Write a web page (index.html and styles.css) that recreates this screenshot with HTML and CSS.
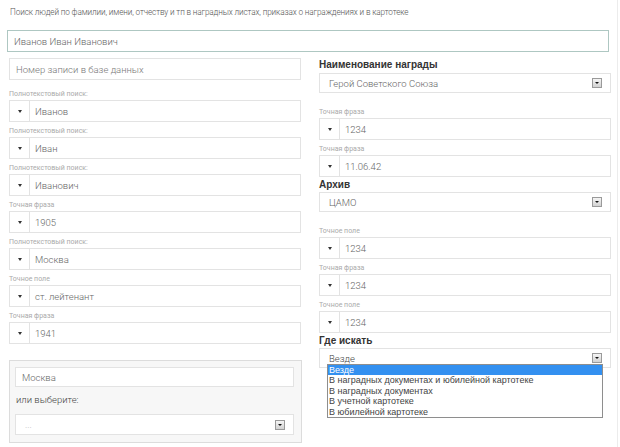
FILE: index.html
```html
<!DOCTYPE html>
<html lang="ru">
<head>
<meta charset="utf-8">
<title>Поиск людей</title>
<link rel="stylesheet" href="styles.css">
</head>
<body>
<div class="page">
  <p class="title">Поиск людей по фамилии, имени, отчеству и тп в наградных листах, приказах о награждениях и в картотеке</p>
  <div class="top"><div class="inp main">Иванов Иван Иванович</div></div>
  <div class="cols">
    <div class="col">
      <div class="inp plain">Номер записи в базе данных</div>
      <div class="field first"><div class="label">Полнотекстовый поиск:</div><div class="group"><span class="cell"><i class="tri"></i></span><span class="val">Иванов</span></div></div>
      <div class="field"><div class="label">Полнотекстовый поиск:</div><div class="group"><span class="cell"><i class="tri"></i></span><span class="val">Иван</span></div></div>
      <div class="field"><div class="label">Полнотекстовый поиск:</div><div class="group"><span class="cell"><i class="tri"></i></span><span class="val">Иванович</span></div></div>
      <div class="field"><div class="label">Точная фраза</div><div class="group"><span class="cell"><i class="tri"></i></span><span class="val">1905</span></div></div>
      <div class="field"><div class="label">Полнотекстовый поиск:</div><div class="group"><span class="cell"><i class="tri"></i></span><span class="val">Москва</span></div></div>
      <div class="field"><div class="label">Точное поле</div><div class="group"><span class="cell"><i class="tri"></i></span><span class="val">ст. лейтенант</span></div></div>
      <div class="field"><div class="label">Точная фраза</div><div class="group"><span class="cell"><i class="tri"></i></span><span class="val">1941</span></div></div>
      <div class="panel">
        <div class="inp city">Москва</div>
        <div class="or">или выберите:</div>
        <div class="sel psel"><span class="stext dim">...</span><span class="sbtn"><i class="tri"></i></span></div>
      </div>
    </div>
    <div class="col">
      <div class="heading">Наименование награды</div>
      <div class="sel"><span class="stext">Герой Советского Союза</span><span class="sbtn"><i class="tri"></i></span></div>
      <div class="field after-sel"><div class="label">Точная фраза</div><div class="group"><span class="cell"><i class="tri"></i></span><span class="val">1234</span></div></div>
      <div class="field"><div class="label">Точная фраза</div><div class="group"><span class="cell"><i class="tri"></i></span><span class="val">11.06.42</span></div></div>
      <div class="heading h2">Архив</div>
      <div class="sel"><span class="stext">ЦАМО</span><span class="sbtn"><i class="tri"></i></span></div>
      <div class="field after-sel"><div class="label">Точное поле</div><div class="group"><span class="cell"><i class="tri"></i></span><span class="val">1234</span></div></div>
      <div class="field"><div class="label">Точная фраза</div><div class="group"><span class="cell"><i class="tri"></i></span><span class="val">1234</span></div></div>
      <div class="field"><div class="label">Точное поле</div><div class="group"><span class="cell"><i class="tri"></i></span><span class="val">1234</span></div></div>
      <div class="heading h2">Где искать</div>
      <div class="sel open"><span class="stext dark">Везде</span><span class="sbtn"><i class="tri"></i></span>
        <ul class="list">
          <li class="hl">Везде</li>
          <li>В наградных документах и юбилейной картотеке</li>
          <li>В наградных документах</li>
          <li>В учетной картотеке</li>
          <li>В юбилейной картотеке</li>
        </ul>
      </div>
    </div>
  </div>
</div>
</body>
</html>
```
FILE: styles.css
```css
body {
  margin: 0;
  background: #fff;
  font-family: Roboto, "Liberation Sans", sans-serif;
}
.page {
  width: 618px;
  height: 447px;
  box-sizing: border-box;
  border-right: 1px solid #ececec;
  overflow: hidden;
}
.title {
  margin: 0;
  padding: 7px 0 0 10px;
  font-size: 8.2px;
  font-weight: 300;
  letter-spacing: -0.12px;
  line-height: 10px;
  color: #555;
}
.top {
  margin-top: 13px;
  padding-left: 7px;
}
.inp {
  height: 22px;
  box-sizing: border-box;
  border: 1px solid #e3e3e3;
  background: #fff;
  display: flex;
  align-items: center;
  padding-left: 6px;
  font-size: 9.5px;
  font-weight: 300;
  color: #666;
}
.main {
  width: 602px;
  border-color: #aec7c2;
}
.cols {
  display: grid;
  grid-template-columns: 292px 292px;
  column-gap: 18px;
  margin-top: 6px;
  padding-left: 9px;
}
.col {
  display: flex;
  flex-direction: column;
}
.plain { color: #777; }
.field { margin-top: 4px; }
.field.first { margin-top: 9px; }
.field.after-sel { margin-top: 14px; }
.label {
  font-size: 7px;
  line-height: 10px;
  color: #aaa;
  margin-bottom: 1px;
}
.group {
  height: 22px;
  box-sizing: border-box;
  border: 1px solid #e3e3e3;
  display: flex;
  align-items: center;
  background: #fff;
}
.cell {
  width: 19px;
  height: 100%;
  border-right: 1px solid #e3e3e3;
  display: flex;
  align-items: center;
  justify-content: center;
}
.tri {
  display: block;
  width: 0;
  height: 0;
  border-left: 2.5px solid transparent;
  border-right: 2.5px solid transparent;
  border-top: 3px solid #333;
}
.val {
  padding-left: 5px;
  font-size: 9.5px;
  font-weight: 300;
  color: #666;
}
.panel {
  margin-top: 16px;
  width: 293px;
  box-sizing: border-box;
  border: 1px solid #dcdcdc;
  background: #f7f7f7;
  padding: 6px 7px 7px 5px;
}
.city { height: 20px; }
.or {
  margin-top: 6px;
  padding-left: 1px;
  font-size: 9.5px;
  font-weight: 300;
  line-height: 14px;
  color: #444;
}
.sel {
  position: relative;
  height: 20px;
  box-sizing: border-box;
  border: 1px solid #e3e3e3;
  background: #fff;
  display: flex;
  align-items: center;
  justify-content: space-between;
  padding: 0 8px 0 9px;
}
.psel {
  margin-top: 7px;
  height: 21px;
}
.stext {
  font-size: 9.5px;
  font-weight: 300;
  color: #666;
}
.stext.dim { color: #bbb; }
.stext.dark { color: #444; }
.sbtn {
  width: 10px;
  height: 10px;
  box-sizing: border-box;
  border: 1px solid #9a9a9a;
  background: linear-gradient(#f5f5f5, #d2d2d2);
  display: flex;
  align-items: center;
  justify-content: center;
}
.sbtn .tri {
  border-left-width: 2px;
  border-right-width: 2px;
  border-top-width: 2.5px;
  border-top-color: #111;
}
.heading {
  font-family: "Liberation Sans", Arial, sans-serif;
  font-weight: bold;
  font-size: 10px;
  line-height: 14px;
  color: #333;
  margin-bottom: 1px;
}
.heading.h2 {
  margin-top: 1px;
  margin-bottom: 0;
}
.list {
  position: absolute;
  top: 15px;
  left: 7px;
  right: 7px;
  margin: 0;
  padding: 0;
  list-style: none;
  border: 1px solid #8e8e8e;
  background: #fff;
  font-family: "Liberation Sans", Arial, sans-serif;
  font-size: 9px;
  line-height: 10.4px;
  color: #444;
}
.list li { padding-left: 1px; white-space: nowrap; }
.list li.hl {
  background: #3390f0;
  color: #fff;
}
```
